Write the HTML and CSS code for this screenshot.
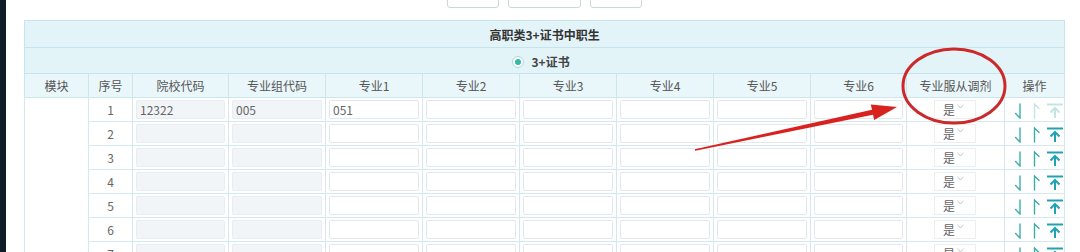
FILE: index.html
```html
<!DOCTYPE html>
<html lang="zh-CN">
<head>
    <meta charset="UTF-8">
    <title>志愿填报 - 高职类3+证书中职生</title>
    <link rel="stylesheet" href="styles.css">
</head>
<body>
    <div class="screen">
        <div class="sidebar"></div>
        <div class="main">
            <div class="toolbar">
                <button class="btn btn-sm">返回</button>
                <button class="btn btn-md">暂存志愿</button>
                <button class="btn btn-sm">提交</button>
            </div>

            <table class="plan">
                <colgroup>
                    <col style="width:64px">
                    <col style="width:44px">
                    <col style="width:96px">
                    <col style="width:97px">
                    <col style="width:97px">
                    <col style="width:97px">
                    <col style="width:97px">
                    <col style="width:97px">
                    <col style="width:97px">
                    <col style="width:96px">
                    <col style="width:98px">
                    <col style="width:60px">
                </colgroup>
                <tr class="title-row">
                    <td colspan="12">高职类3+证书中职生</td>
                </tr>
                <tr class="radio-row">
                    <td colspan="12">
                        <label class="radio"><span class="radio-dot"></span>3+证书</label>
                    </td>
                </tr>
                <tr class="head-row">
                    <th>模块</th>
                    <th>序号</th>
                    <th>院校代码</th>
                    <th>专业组代码</th>
                    <th>专业1</th>
                    <th>专业2</th>
                    <th>专业3</th>
                    <th>专业4</th>
                    <th>专业5</th>
                    <th>专业6</th>
                    <th>专业服从调剂</th>
                    <th>操作</th>
                </tr>

                <!-- row 1 -->
                <tr class="data-row">
                    <td class="module" rowspan="7"></td>
                    <td class="seq">1</td>
                    <td><div class="field locked">12322</div></td>
                    <td><div class="field locked">005</div></td>
                    <td><div class="field">051</div></td>
                    <td><div class="field"></div></td>
                    <td><div class="field"></div></td>
                    <td><div class="field"></div></td>
                    <td><div class="field"></div></td>
                    <td><div class="field"></div></td>
                    <td><div class="select">是<svg class="caret" viewBox="0 0 7 5"><path d="M0.5 0.5L3.5 4L6.5 0.5"/></svg></div></td>
                    <td class="ops">
                        <svg class="op op-down" viewBox="0 0 8 16"><path d="M6 1V15L1.5 10.5"/></svg>
                        <svg class="op op-up off" viewBox="0 0 7 16"><path d="M1.5 15V1L6 5.5"/></svg>
                        <svg class="op op-top off" viewBox="0 0 18 16"><path class="bar" d="M1 1.5H17"/><path d="M9 5V15M4.5 9.5L9 5L13.5 9.5"/></svg>
                    </td>
                </tr>
                <!-- row 2 -->
                <tr class="data-row">
                    <td class="seq">2</td>
                    <td><div class="field locked"></div></td>
                    <td><div class="field locked"></div></td>
                    <td><div class="field"></div></td>
                    <td><div class="field"></div></td>
                    <td><div class="field"></div></td>
                    <td><div class="field"></div></td>
                    <td><div class="field"></div></td>
                    <td><div class="field"></div></td>
                    <td><div class="select">是<svg class="caret" viewBox="0 0 7 5"><path d="M0.5 0.5L3.5 4L6.5 0.5"/></svg></div></td>
                    <td class="ops">
                        <svg class="op op-down" viewBox="0 0 8 16"><path d="M6 1V15L1.5 10.5"/></svg>
                        <svg class="op op-up" viewBox="0 0 7 16"><path d="M1.5 15V1L6 5.5"/></svg>
                        <svg class="op op-top" viewBox="0 0 18 16"><path class="bar" d="M1 1.5H17"/><path d="M9 5V15M4.5 9.5L9 5L13.5 9.5"/></svg>
                    </td>
                </tr>
                <!-- row 3 -->
                <tr class="data-row">
                    <td class="seq">3</td>
                    <td><div class="field locked"></div></td>
                    <td><div class="field locked"></div></td>
                    <td><div class="field"></div></td>
                    <td><div class="field"></div></td>
                    <td><div class="field"></div></td>
                    <td><div class="field"></div></td>
                    <td><div class="field"></div></td>
                    <td><div class="field"></div></td>
                    <td><div class="select">是<svg class="caret" viewBox="0 0 7 5"><path d="M0.5 0.5L3.5 4L6.5 0.5"/></svg></div></td>
                    <td class="ops">
                        <svg class="op op-down" viewBox="0 0 8 16"><path d="M6 1V15L1.5 10.5"/></svg>
                        <svg class="op op-up" viewBox="0 0 7 16"><path d="M1.5 15V1L6 5.5"/></svg>
                        <svg class="op op-top" viewBox="0 0 18 16"><path class="bar" d="M1 1.5H17"/><path d="M9 5V15M4.5 9.5L9 5L13.5 9.5"/></svg>
                    </td>
                </tr>
                <!-- row 4 -->
                <tr class="data-row">
                    <td class="seq">4</td>
                    <td><div class="field locked"></div></td>
                    <td><div class="field locked"></div></td>
                    <td><div class="field"></div></td>
                    <td><div class="field"></div></td>
                    <td><div class="field"></div></td>
                    <td><div class="field"></div></td>
                    <td><div class="field"></div></td>
                    <td><div class="field"></div></td>
                    <td><div class="select">是<svg class="caret" viewBox="0 0 7 5"><path d="M0.5 0.5L3.5 4L6.5 0.5"/></svg></div></td>
                    <td class="ops">
                        <svg class="op op-down" viewBox="0 0 8 16"><path d="M6 1V15L1.5 10.5"/></svg>
                        <svg class="op op-up" viewBox="0 0 7 16"><path d="M1.5 15V1L6 5.5"/></svg>
                        <svg class="op op-top" viewBox="0 0 18 16"><path class="bar" d="M1 1.5H17"/><path d="M9 5V15M4.5 9.5L9 5L13.5 9.5"/></svg>
                    </td>
                </tr>
                <!-- row 5 -->
                <tr class="data-row">
                    <td class="seq">5</td>
                    <td><div class="field locked"></div></td>
                    <td><div class="field locked"></div></td>
                    <td><div class="field"></div></td>
                    <td><div class="field"></div></td>
                    <td><div class="field"></div></td>
                    <td><div class="field"></div></td>
                    <td><div class="field"></div></td>
                    <td><div class="field"></div></td>
                    <td><div class="select">是<svg class="caret" viewBox="0 0 7 5"><path d="M0.5 0.5L3.5 4L6.5 0.5"/></svg></div></td>
                    <td class="ops">
                        <svg class="op op-down" viewBox="0 0 8 16"><path d="M6 1V15L1.5 10.5"/></svg>
                        <svg class="op op-up" viewBox="0 0 7 16"><path d="M1.5 15V1L6 5.5"/></svg>
                        <svg class="op op-top" viewBox="0 0 18 16"><path class="bar" d="M1 1.5H17"/><path d="M9 5V15M4.5 9.5L9 5L13.5 9.5"/></svg>
                    </td>
                </tr>
                <!-- row 6 -->
                <tr class="data-row">
                    <td class="seq">6</td>
                    <td><div class="field locked"></div></td>
                    <td><div class="field locked"></div></td>
                    <td><div class="field"></div></td>
                    <td><div class="field"></div></td>
                    <td><div class="field"></div></td>
                    <td><div class="field"></div></td>
                    <td><div class="field"></div></td>
                    <td><div class="field"></div></td>
                    <td><div class="select">是<svg class="caret" viewBox="0 0 7 5"><path d="M0.5 0.5L3.5 4L6.5 0.5"/></svg></div></td>
                    <td class="ops">
                        <svg class="op op-down" viewBox="0 0 8 16"><path d="M6 1V15L1.5 10.5"/></svg>
                        <svg class="op op-up" viewBox="0 0 7 16"><path d="M1.5 15V1L6 5.5"/></svg>
                        <svg class="op op-top" viewBox="0 0 18 16"><path class="bar" d="M1 1.5H17"/><path d="M9 5V15M4.5 9.5L9 5L13.5 9.5"/></svg>
                    </td>
                </tr>
                <!-- row 7 -->
                <tr class="data-row">
                    <td class="seq">7</td>
                    <td><div class="field locked"></div></td>
                    <td><div class="field locked"></div></td>
                    <td><div class="field"></div></td>
                    <td><div class="field"></div></td>
                    <td><div class="field"></div></td>
                    <td><div class="field"></div></td>
                    <td><div class="field"></div></td>
                    <td><div class="field"></div></td>
                    <td><div class="select">是<svg class="caret" viewBox="0 0 7 5"><path d="M0.5 0.5L3.5 4L6.5 0.5"/></svg></div></td>
                    <td class="ops">
                        <svg class="op op-down" viewBox="0 0 8 16"><path d="M6 1V15L1.5 10.5"/></svg>
                        <svg class="op op-up" viewBox="0 0 7 16"><path d="M1.5 15V1L6 5.5"/></svg>
                        <svg class="op op-top" viewBox="0 0 18 16"><path class="bar" d="M1 1.5H17"/><path d="M9 5V15M4.5 9.5L9 5L13.5 9.5"/></svg>
                    </td>
                </tr>
            </table>
        </div>

        <!-- red annotation drawn over the screenshot -->
        <svg class="markup" width="1080" height="252" viewBox="0 0 1080 252">
            <ellipse cx="954" cy="86" rx="51" ry="37"/>
            <polygon points="694.8,149.2 872,109.8 870.8,104.4 897,107 874.2,120 873,114.7 695.2,150.8"/>
        </svg>
    </div>
</body>
</html>
```

FILE: styles.css
```css
body {
    margin: 0;
    background: #fff;
    font-family: "Noto Sans CJK SC", "Noto Sans", sans-serif;
    overflow: hidden;
}

.screen {
    position: relative;
    display: flex;
    height: 252px;
    overflow: hidden;
}

.sidebar {
    width: 6px;
    flex: none;
    background: #0e1c27;
}

.main {
    padding-left: 18px;
    width: 1040px;
}

/* buttons above the table, only their bottom edge is on screen */
.toolbar {
    height: 8px;
    margin-bottom: 12px;
    display: flex;
    justify-content: center;
    align-items: flex-end;
    gap: 9px;
    overflow: hidden;
}

.btn {
    height: 28px;
    flex: none;
    background: #fff;
    border: 1px solid #cbd9d6;
    border-radius: 3px;
    font-family: inherit;
    font-size: 12px;
    color: #666;
    padding: 0;
    line-height: 26px;
}

.btn-sm {
    width: 52px;
}

.btn-md {
    width: 73px;
}

.plan {
    border-collapse: collapse;
    table-layout: fixed;
    width: 1040px;
    font-size: 12px;
    color: #555;
}

.plan td,
.plan th {
    border: 1px solid #d4e8ef;
    padding: 0;
    text-align: center;
    font-weight: normal;
}

.title-row {
    height: 27px;
}

.title-row td {
    background: #e3f4f9;
    border-color: #c6e4ed;
    color: #333;
    font-weight: bold;
}

.radio-row {
    height: 26px;
}

.radio-row td {
    background: #e3f4f9;
    border-color: #c6e4ed;
}

.radio {
    display: inline-flex;
    align-items: center;
    gap: 8px;
    color: #444;
    font-weight: bold;
    margin-left: -8px;
}

.radio-dot {
    width: 12px;
    height: 12px;
    box-sizing: border-box;
    border-radius: 50%;
    border: 1px solid #a9ddd8;
    background: #fff;
    display: flex;
    align-items: center;
    justify-content: center;
}

.radio-dot::after {
    content: "";
    width: 6px;
    height: 6px;
    border-radius: 50%;
    background: #35b7a9;
}

.head-row {
    height: 24px;
}

.head-row th {
    background: #e9f6fa;
    border-color: #cde6ee;
    color: #555;
}

.data-row {
    height: 24px;
}

.data-row td {
    background: #fff;
}

.module {
    vertical-align: top;
}

.seq {
    color: #666;
}

.field {
    height: 19px;
    margin: 0 3px 0 3px;
    box-sizing: border-box;
    border: 1px solid #e2e8ec;
    border-radius: 2px;
    background: #fff;
    text-align: left;
    padding-left: 3px;
    line-height: 17px;
    color: #666;
}

.field.locked {
    background: #f2f5f8;
    border-color: #e8edf1;
}

.select {
    width: 42px;
    height: 19px;
    margin-left: 27px;
    box-sizing: border-box;
    border: 1px solid #eceff1;
    background: #fff;
    display: flex;
    align-items: center;
    padding-left: 8px;
    gap: 2px;
    line-height: 17px;
    color: #666;
}

.caret {
    width: 7px;
    height: 5px;
    margin-top: -6px;
    fill: none;
    stroke: #c4c9cc;
    stroke-width: 1;
}

.ops {
    text-align: left;
}

.ops .op {
    display: inline-block;
    vertical-align: middle;
    height: 16px;
    fill: none;
    stroke-linecap: round;
}

.op-down {
    width: 8px;
    margin-left: 9px;
    stroke: #3bafa7;
    stroke-width: 1.4;
}

.op-up {
    width: 7px;
    margin-left: 8px;
    stroke: #3bafa7;
    stroke-width: 1.4;
}

.op-top {
    width: 18px;
    margin-left: 3px;
    stroke: #20a2b2;
    stroke-width: 2;
    stroke-linecap: butt !important;
}

.op.off {
    stroke: #c4e4e3;
}

.markup {
    position: absolute;
    top: 0;
    left: 0;
    pointer-events: none;
}

.markup ellipse {
    fill: none;
    stroke: #cc2a2a;
    stroke-width: 3;
}

.markup polygon {
    fill: #d8221f;
}
```
